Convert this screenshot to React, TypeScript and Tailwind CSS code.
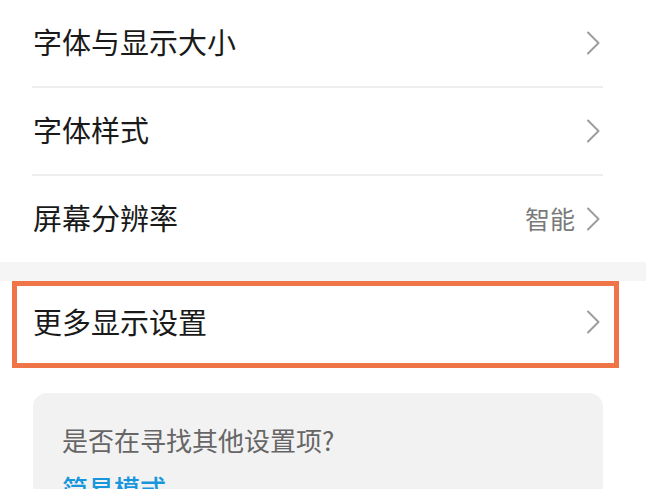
import type { ReactNode } from "react"

const font = { fontFamily: '"Noto Sans CJK SC", "Noto Sans", sans-serif' }

function Chevron() {
  return (
    <svg width="14" height="24" viewBox="0 0 14 24" fill="none" className="shrink-0">
      <polyline
        points="2,1.5 12.5,12 2,22.5"
        stroke="#9c9c9c"
        strokeWidth="2"
        strokeLinecap="round"
        strokeLinejoin="round"
      />
    </svg>
  )
}

function Row({ label, value }: { label: string; value?: ReactNode }) {
  return (
    <div className="flex h-[86px] items-center justify-between pl-[33px] pr-[46px]">
      <span className="pb-[3px] text-[29px] leading-none text-[#1a1a1a]">{label}</span>
      <div className="flex items-center gap-[11px]">
        {value && <span className="pb-[2px] text-[25px] leading-none text-[#7a7a7a]">{value}</span>}
        <Chevron />
      </div>
    </div>
  )
}

function Divider() {
  return <div className="mx-[32px] h-[2px] w-[571px] bg-[#eeeeee]" />
}

export default function App() {
  return (
    <div className="h-[489px] w-[646px] overflow-hidden bg-white" style={font}>
      <Row label="字体与显示大小" />
      <Divider />
      <Row label="字体样式" />
      <Divider />
      <Row label="屏幕分辨率" value="智能" />

      <div className="h-[19px] bg-[#f5f5f6]" />

      <div className="ml-[12px] flex h-[87px] w-[607px] items-center justify-between border-[5px] border-[#ef7447] pb-[6px] pl-[16px] pr-[14px]">
        <span className="text-[29px] leading-none text-[#1a1a1a]">更多显示设置</span>
        <Chevron />
      </div>

      <div className="ml-[33px] mt-[25px] h-[120px] w-[570px] rounded-[14px] bg-[#f2f2f2] px-[29px] pt-[34px]">
        <p className="text-[26px] leading-none text-[#666666]">是否在寻找其他设置项?</p>
        <p className="mt-[22px] text-[26px] font-medium leading-none text-[#1896db]">简易模式</p>
      </div>
    </div>
  )
}
